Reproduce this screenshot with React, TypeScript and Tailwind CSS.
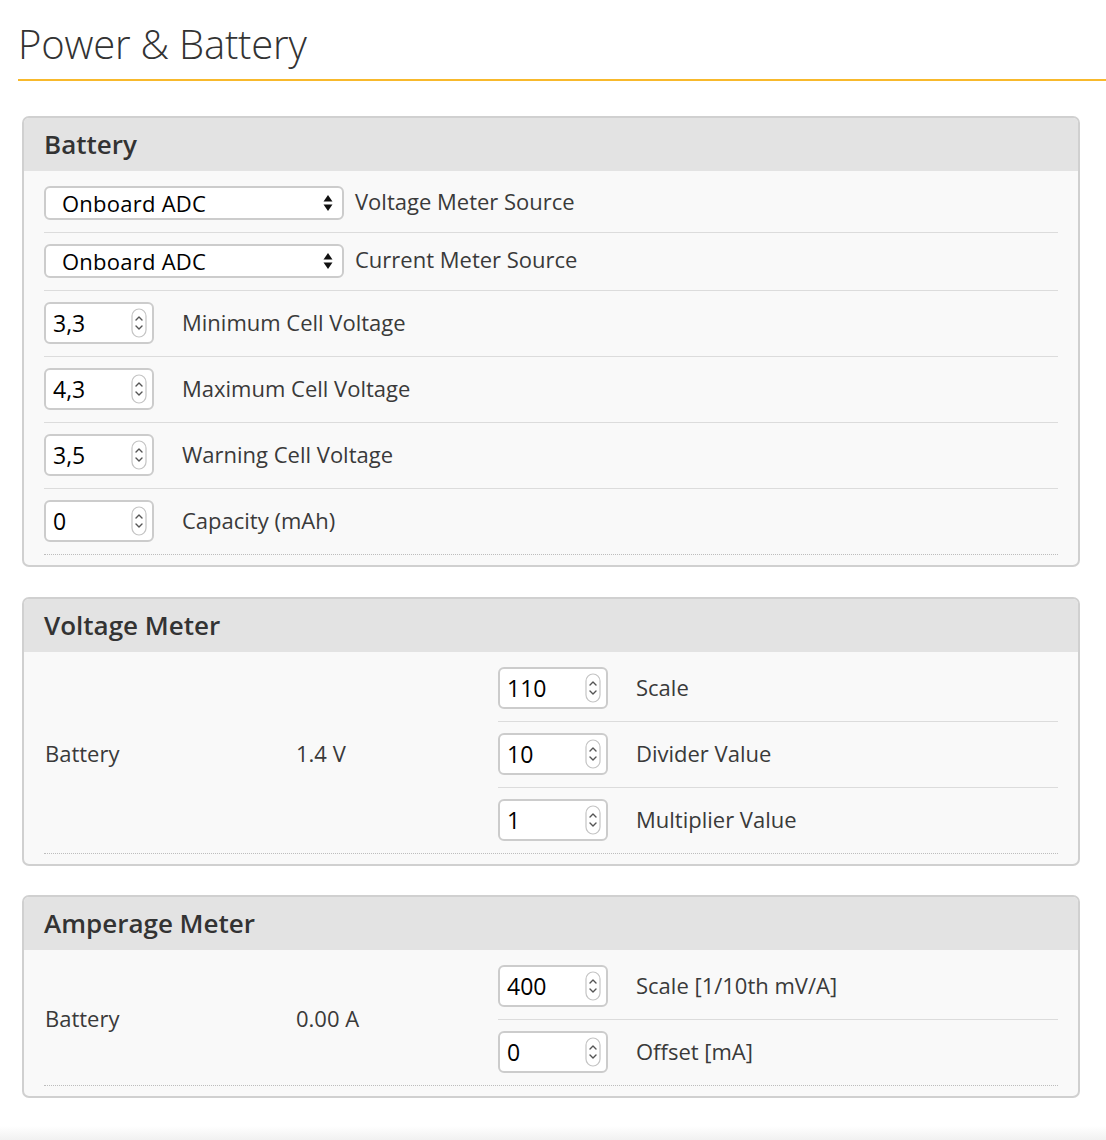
import React from "react";

const font = { fontFamily: '"Open Sans", "Liberation Sans", sans-serif' };

function Spinner() {
  return (
    <svg width="16" height="30" viewBox="0 0 16 30" className="shrink-0">
      <rect x="1" y="1" width="14" height="28" rx="7" fill="#fff" stroke="#c4c4c4" strokeWidth="1.2" />
      <path d="M5 12 L8 9 L11 12" fill="none" stroke="#555" strokeWidth="1.4" strokeLinecap="round" strokeLinejoin="round" />
      <path d="M5 18 L8 21 L11 18" fill="none" stroke="#555" strokeWidth="1.4" strokeLinecap="round" strokeLinejoin="round" />
    </svg>
  );
}

function NumInput({ value }: { value: string }) {
  return (
    <div className="w-[110px] h-[42px] shrink-0 bg-white border-2 border-[#cccccc] rounded-[6px] flex items-center justify-between pl-[7px] pr-[5px]">
      <span className="text-[23px] text-black leading-none">{value}</span>
      <Spinner />
    </div>
  );
}

function Select({ value }: { value: string }) {
  return (
    <div className="w-[300px] h-[34px] shrink-0 bg-white border-2 border-[#cccccc] rounded-[6px] flex items-center justify-between pl-[16px] pr-[8px]">
      <span className="text-[22px] tracking-[0.25px] text-black leading-none">{value}</span>
      <svg width="12" height="20" viewBox="0 0 12 20">
        <path d="M1.5 8.5 L6 2 L10.5 8.5 Z" fill="#111" />
        <path d="M1.5 11.5 L6 18 L10.5 11.5 Z" fill="#111" />
      </svg>
    </div>
  );
}

function Panel({ title, children }: { title: string; children: React.ReactNode }) {
  return (
    <div className="ml-[22px] w-[1058px] border-2 border-[#d0d0d0] rounded-[7px] overflow-hidden bg-[#f9f9f9]">
      <div className="h-[53px] bg-[#e3e3e3] flex items-center pl-[20px]">
        <span className="text-[26px] font-semibold text-[#333333]">{title}</span>
      </div>
      <div className="px-[20px] pt-[4px] pb-[10px]">{children}</div>
    </div>
  );
}

function Row({ children, last }: { children: React.ReactNode; last?: boolean }) {
  return (
    <div
      className={
        "flex items-center pt-[11px] pb-[12px] " +
        (last ? "border-b border-dotted border-[#bdbdbd]" : "border-b border-[#dcdcdc]")
      }
    >
      {children}
    </div>
  );
}

function Label({ children, ml }: { children: React.ReactNode; ml: string }) {
  return <span className={"text-[22px] leading-[26px] text-[#3a3a3a] " + ml}>{children}</span>;
}

function MeterTable({
  name,
  reading,
  rows,
}: {
  name: string;
  reading: string;
  rows: { v: string; l: string }[];
}) {
  return (
    <div className="flex border-b border-dotted border-[#bdbdbd]">
      <div className="w-[252px] flex items-center pl-[1px] pb-[3px]">
        <span className="text-[22px] leading-[26px] text-[#3a3a3a]">{name}</span>
      </div>
      <div className="w-[202px] flex items-center pb-[3px]">
        <span className="text-[22px] leading-[26px] text-[#3a3a3a]">{reading}</span>
      </div>
      <div className="flex-1 flex flex-col">
        {rows.map((r, i) => (
          <div
            key={i}
            className={
              "flex items-center pt-[11px] pb-[12px] " +
              (i < rows.length - 1 ? "border-b border-[#dcdcdc]" : "")
            }
          >
            <NumInput value={r.v} />
            <Label ml="ml-[28px] pb-[2px]">{r.l}</Label>
          </div>
        ))}
      </div>
    </div>
  );
}

export default function App() {
  return (
    <div className="w-[1106px] h-[1140px] bg-white flex flex-col overflow-hidden" style={font}>
      <div className="pl-[18px] pt-[14px] h-[79px]">
        <h1 className="text-[40px] font-light text-[#333333] leading-[60px] tracking-[-0.2px]">Power &amp; Battery</h1>
      </div>
      <div className="ml-[18px] h-[2px] bg-[#f8b92c]" />
      <div className="h-[35px]" />
      <Panel title="Battery">
        <Row>
          <Select value="Onboard ADC" />
          <Label ml="ml-[11px] pb-[4px]">Voltage Meter Source</Label>
        </Row>
        <Row>
          <Select value="Onboard ADC" />
          <Label ml="ml-[11px] pb-[4px]">Current Meter Source</Label>
        </Row>
        <Row>
          <NumInput value="3,3" />
          <Label ml="ml-[28px] pb-[2px]">Minimum Cell Voltage</Label>
        </Row>
        <Row>
          <NumInput value="4,3" />
          <Label ml="ml-[28px] pb-[2px]">Maximum Cell Voltage</Label>
        </Row>
        <Row>
          <NumInput value="3,5" />
          <Label ml="ml-[28px] pb-[2px]">Warning Cell Voltage</Label>
        </Row>
        <Row last>
          <NumInput value="0" />
          <Label ml="ml-[28px] pb-[2px]">Capacity (mAh)</Label>
        </Row>
      </Panel>
      <div className="h-[30px]" />
      <Panel title="Voltage Meter">
        <MeterTable
          name="Battery"
          reading="1.4 V"
          rows={[
            { v: "110", l: "Scale" },
            { v: "10", l: "Divider Value" },
            { v: "1", l: "Multiplier Value" },
          ]}
        />
      </Panel>
      <div className="h-[29px]" />
      <Panel title="Amperage Meter">
        <MeterTable
          name="Battery"
          reading="0.00 A"
          rows={[
            { v: "400", l: "Scale [1/10th mV/A]" },
            { v: "0", l: "Offset [mA]" },
          ]}
        />
      </Panel>
      <div className="flex-1" />
      <div className="h-[14px] bg-gradient-to-b from-white to-[#f1f1f1]" />
    </div>
  );
}
